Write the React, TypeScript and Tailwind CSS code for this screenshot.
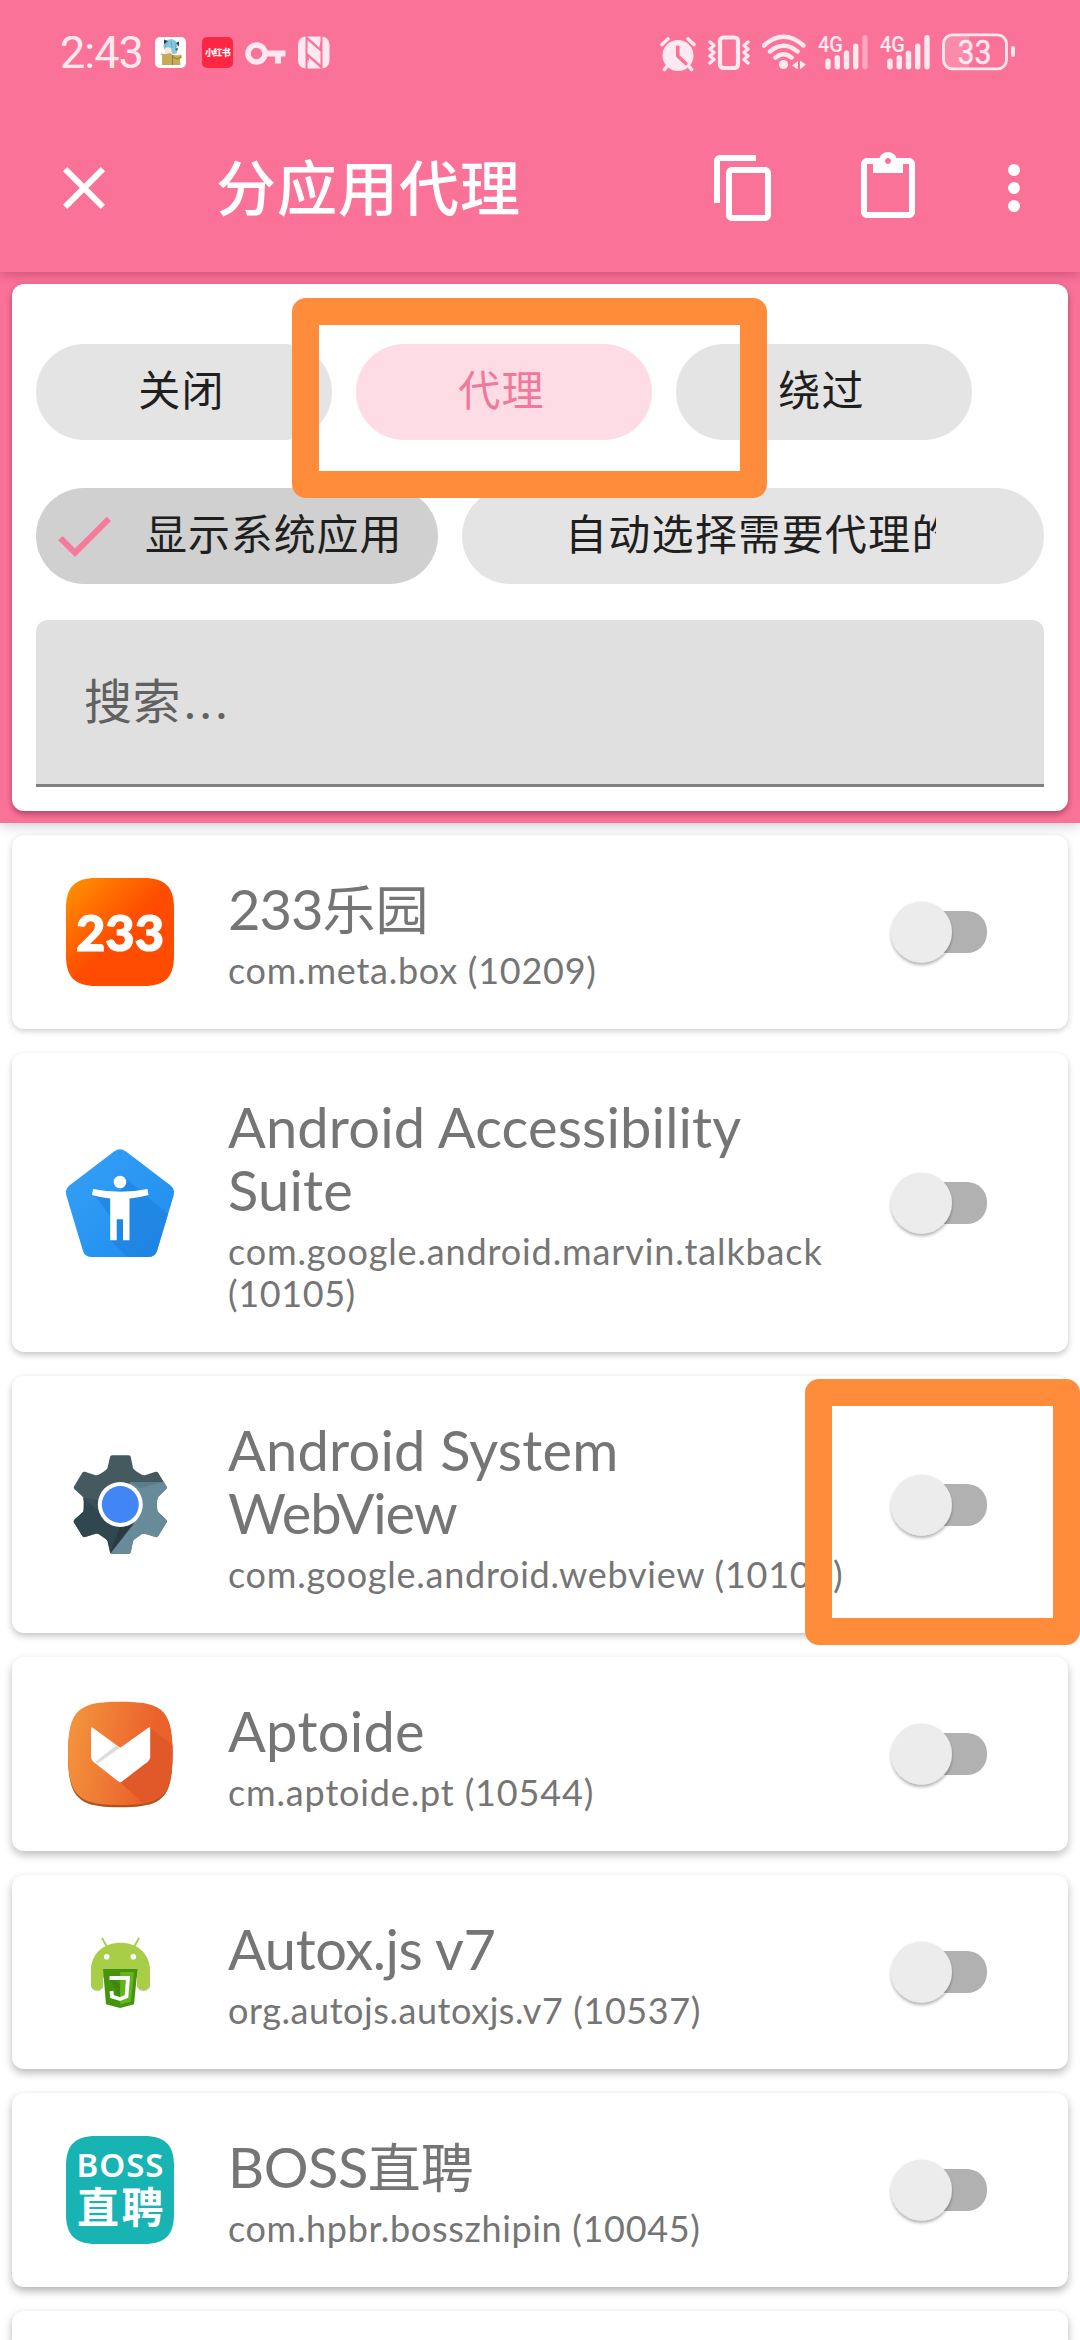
import type { ReactNode } from "react";

const CJK = "font-['Noto_Sans_CJK_SC',sans-serif]";

function StatusBar() {
  return (
    <div className="flex h-[104px] items-start pt-[33px] text-[#ffe9f0]">
      <div className="ml-[60px] flex h-[39px] w-[95px] items-center font-['Roboto','Noto_Sans_CJK_SC',sans-serif] text-[45px] leading-[39px] tracking-[-1px] whitespace-nowrap">
        2:43
      </div>
      <svg className="mt-1 h-[31px] w-[31px]" viewBox="0 0 31 31">
        <rect width="31" height="31" rx="5" fill="#fff" />
        <path d="M9 3.500l3-.5 5-1 4 2 1.500 4-1 4 .5 4.500-5 .5-1-4H9.500l-1-3z" fill="#86c7de" />
        <path d="M9 2.500l4 1.800-4 3zM24 4.500v5l-3-3.500zM20 12l3-1-1 3z" fill="#2d3c4d" />
        <path d="M9.500 12.500c1-2.500 4.500-3 7-.5l-1 4.500h-5z" fill="#fbe6da" />
        <path d="M12 4.500l-2 6M16 4l1 7M20 6l1 8" stroke="#5ba4bf" strokeWidth="0.800" fill="none" />
        <path d="M5.500 16.500l5 .5 5-1 2 2 6 .2 2.500-.7 1 2.500-2 2.500.5 5.500H7V18.500z" fill="#c7ab59" />
        <path d="M17.500 18v10M18 20l4 2 4-2" stroke="#8b7534" strokeWidth="0.900" fill="none" />
      </svg>
      <div className="mt-1 ml-4 flex h-[31px] w-[31px] items-center justify-center rounded-[5px] bg-[#fe2743]">
        <span className={`${CJK} text-[9px] leading-[14px] font-black tracking-[-0.6px] whitespace-nowrap text-white`}>小红书</span>
      </div>
      <svg className="mt-2 ml-[12px] h-[24px] w-[41px]" viewBox="0 0 41 24">
        <circle cx="11.500" cy="12.500" r="8.500" fill="none" stroke="currentColor" strokeWidth="5.600" />
        <path d="M20 9.500h20.500v6H36v7h-6v-7H20z" fill="currentColor" />
      </svg>
      <svg className="mt-[3px] ml-[12px] h-[33px] w-[32px]" viewBox="0 0 32 33">
        <rect x="0" y="0.500" width="31.500" height="32" rx="8" fill="currentColor" />
        <path d="M8.500 33V2L22.500 14V9M23.500 0V31L10 19V24" fill="none" stroke="#fb7299" strokeWidth="2" />
        <path d="M8 0l14.500 13V6M24 33L10 20v7" fill="none" stroke="#fb7299" strokeWidth="0.800" />
      </svg>
      <svg className="mt-[3px] ml-[330px] h-[36px] w-[36px]" viewBox="0 0 36 36">
        <circle cx="18" cy="19.500" r="15.500" fill="currentColor" />
        <path d="M2 8.500l6-5.500M34 8.500L28 3M8 29l-3.500 4.500M28 29l3.500 4.500" stroke="currentColor" strokeWidth="3.600" strokeLinecap="round" />
        <path d="M17.800 11v9l8 7.500" fill="none" stroke="#fb7299" strokeWidth="3.600" strokeLinecap="round" strokeLinejoin="round" />
      </svg>
      <svg className="mt-[2px] ml-[12px] h-[35px] w-[42px]" viewBox="0 0 42 35">
        <rect x="12" y="2.500" width="18" height="30.500" rx="3.500" fill="none" stroke="currentColor" strokeWidth="4.200" />
        <path d="M2 7l4 3.500-4 3.500 4 3.500L2 21l4 3.500L2 28M40 7l-4 3.500 4 3.500-4 3.500 4 3.500-4 3.500 4 3.500" fill="none" stroke="currentColor" strokeWidth="3.400" strokeLinejoin="round" strokeLinecap="round" />
      </svg>
      <svg className="mt-[1px] ml-[12px] h-[36px] w-[44px]" viewBox="0 0 44 36">
        <path d="M2 11.500Q21.500-6 41.500 11.500M8 17.500Q21.500 6 35.500 17.500M13.500 23.500Q21.500 17 29.500 23.500" fill="none" stroke="currentColor" strokeWidth="4.400" strokeLinecap="round" />
        <circle cx="21.500" cy="30.500" r="4.600" fill="currentColor" />
        <path d="M36 27v8.500l-6-4zM38 26.500v9l6-5z" fill="currentColor" />
      </svg>
      <Signal last="#fea6c0" />
      <Signal last="#ffe9f0" />
      <svg className="ml-[12px] h-[38px] w-[73px]" viewBox="0 0 73 38">
        <path d="M9 2H27V36H9Q1.500 36 1.500 27V10Q1.500 2 9 2Z" fill="#fc8aaa" />
        <rect x="1.500" y="1.800" width="63" height="34" rx="9" fill="none" stroke="currentColor" strokeWidth="2.800" />
        <rect x="69" y="13" width="4" height="11" rx="2" fill="currentColor" />
        <text x="32.500" y="31" fontFamily="Roboto, sans-serif" fontSize="34" fill="currentColor" stroke="currentColor" strokeWidth="0.400" textAnchor="middle" textLength="34" lengthAdjust="spacingAndGlyphs">33</text>
      </svg>
    </div>
  );
}

function Signal({ last }: { last: string }) {
  return (
    <svg className="-mt-[5px] ml-[12px] h-[42px] w-[50px]" viewBox="0 -6 50 42">
      <text x="0" y="17.500" fontFamily="Roboto, sans-serif" fontWeight="500" fontSize="22.500" fill="currentColor" textLength="25" lengthAdjust="spacingAndGlyphs">4G</text>
      <rect x="7.300" y="24.500" width="5.400" height="11" rx="2.700" fill="currentColor" />
      <rect x="16.600" y="21" width="5.400" height="14.500" rx="2.700" fill="currentColor" />
      <rect x="25.800" y="16.500" width="5.400" height="19" rx="2.700" fill="currentColor" />
      <rect x="35" y="9.500" width="5.400" height="26" rx="2.700" fill="currentColor" />
      <rect x="44.300" y="1" width="5.400" height="34.500" rx="2.700" fill={last} />
    </svg>
  );
}

function Toolbar() {
  return (
    <div className="flex h-[168px] items-start pt-12">
      <svg className="ml-12 h-[72px] w-[72px]" viewBox="0 0 24 24" fill="#fff">
        <path d="M19 6.410L17.590 5 12 10.590 6.410 5 5 6.410 10.590 12 5 17.590 6.410 19 12 13.410 17.590 19 19 17.590 13.410 12z" />
      </svg>
      <h1 className={`${CJK} ml-[96px] w-[492px] text-[60px] leading-[66px] font-medium tracking-[1px] whitespace-nowrap text-white`}>分应用代理</h1>
      <svg className="h-[72px] w-[72px]" viewBox="0 0 24 24" fill="#fff">
        <path d="M16 1H4c-1.100 0-2 .9-2 2v14h2V3h12V1zm3 4H8c-1.100 0-2 .9-2 2v14c0 1.100.9 2 2 2h11c1.100 0 2-.9 2-2V7c0-1.100-.9-2-2-2zm0 16H8V7h11v14z" />
      </svg>
      <svg className="ml-[72px] h-[72px] w-[72px]" viewBox="0 0 24 24" fill="#fff">
        <path d="M19 2h-4.180C14.400.84 13.300 0 12 0c-1.300 0-2.400.84-2.820 2H5c-1.100 0-2 .9-2 2v16c0 1.100.9 2 2 2h14c1.100 0 2-.9 2-2V4c0-1.100-.9-2-2-2zm-7 0c.55 0 1 .45 1 1s-.45 1-1 1-1-.45-1-1 .45-1 1-1zm7 18H5V4h2v3h10V4h2v16z" />
      </svg>
      <svg className="ml-[54px] h-[72px] w-[72px]" viewBox="0 0 24 24" fill="#fff">
        <circle cx="12" cy="6" r="2" />
        <circle cx="12" cy="12" r="2" />
        <circle cx="12" cy="18" r="2" />
      </svg>
    </div>
  );
}

function FilterCard() {
  return (
    <section className="relative mx-3 h-[527px] rounded-xl bg-white px-6 pt-[60px] shadow-[0_3px_6px_rgba(60,0,20,0.4)]">
      <div className={`${CJK} flex gap-6 text-[42px] leading-[88px] tracking-[1.3px] text-[#1f1f1f]`}>
        <div className="h-24 w-[296px] rounded-full bg-[#e4e4e4] pr-[5px] text-center">关闭</div>
        <div className="h-24 w-[296px] rounded-full bg-[#fddce5] pr-[5px] text-center text-[#f0799b]">代理</div>
        <div className="h-24 w-[296px] rounded-full bg-[#e4e4e4] pr-[5px] text-center">绕过</div>
      </div>
      <div className={`${CJK} mt-12 flex gap-6 text-[42px] leading-[88px] tracking-[1.3px] text-[#1f1f1f]`}>
        <div className="flex h-24 w-[402px] rounded-full bg-[#d0d0d0]">
          <svg className="mt-[12px] ml-[12px] h-[72px] w-[72px]" viewBox="0 0 24 24" fill="#f77a9d">
            <path d="M9 16.170L4.830 12l-1.420 1.410L9 19 21 7l-1.410-1.410z" />
          </svg>
          <span className="ml-[25px] tracking-[0.9px] whitespace-nowrap">显示系统应用</span>
        </div>
        <div className="h-24 w-[582px] rounded-full bg-[#e4e4e4] pl-[103px]">
          <div className="w-[371px] overflow-hidden whitespace-nowrap">自动选择需要代理的</div>
        </div>
      </div>
      <div className={`${CJK} mt-9 h-[167px] rounded-t-xl border-b-[3px] border-[#808080] bg-[#e0e0e0] pl-12 text-[48px] leading-[157px] tracking-[0.6px] text-[#616161]`}>
        搜索<span className="ml-[3px] font-['Lato',sans-serif] leading-none tracking-[4.500px]">...</span>
      </div>
      <div className="pointer-events-none absolute top-[14px] left-[280px] h-[200px] w-[475px] rounded-[14px] border-[27px] border-[#ff8c3b]" />
    </section>
  );
}

function Switch() {
  return (
    <svg className="h-[78px] w-[116px] shrink-0" viewBox="0 0 116 78">
      <defs>
        <filter id="thumb" x="-30%" y="-30%" width="160%" height="160%">
          <feDropShadow dx="0" dy="2.500" stdDeviation="1.800" floodOpacity="0.300" />
        </filter>
      </defs>
      <rect x="20" y="18" width="86" height="42" rx="20" fill="#b1b1b1" />
      <circle cx="40.500" cy="39" r="30.500" fill="#ececec" filter="url(#thumb)" />
    </svg>
  );
}

type Line = { text: string; track: string; cjk?: string };

function AppCard({ icon, title, sub, height, shadow, children }: { icon: ReactNode; title: Line[]; sub: Line[]; height: string; shadow: string; children?: ReactNode }) {
  return (
    <article className={`relative mx-3 flex shrink-0 items-center rounded-xl bg-white ${height} ${shadow}`}>
      <div className="ml-[54px] h-[108px] w-[108px] shrink-0">{icon}</div>
      <div className="ml-[54px] flex w-[641px] flex-col self-start pt-[42px] font-['Lato','Noto_Sans_CJK_SC',sans-serif] text-[#757575]">
        {title.map((l) => (
          <p key={l.text} className={`h-[63px] text-[56px] leading-[63px] whitespace-nowrap ${l.track}`}>
            {l.text}
            {l.cjk && <span className={`${CJK} text-[53px] leading-none tracking-normal`}>{l.cjk}</span>}
          </p>
        ))}
        <div className="h-[9px]" />
        {sub.map((l) => (
          <p key={l.text} className={`h-[42px] text-[36px] leading-[42px] whitespace-nowrap ${l.track}`}>{l.text}</p>
        ))}
      </div>
      <div className="ml-[12px]">
        <Switch />
      </div>
      {children}
    </article>
  );
}

const Icon233 = (
  <svg viewBox="0 0 108 108">
    <defs>
      <linearGradient id="lg233" x1="0" y1="0" x2="0.600" y2="0.600">
        <stop offset="0" stopColor="#ff9500" />
        <stop offset="0.850" stopColor="#ff4c00" />
      </linearGradient>
    </defs>
    <path d="M54 0H78C99 0 108 9 108 30V78C108 99 99 108 78 108H30C9 108 0 99 0 78V30C0 9 9 0 30 0Z" fill="url(#lg233)" />
    <text x="10" y="72.500" fontFamily="Lato, sans-serif" fontWeight="900" fontSize="50" fill="#fff" stroke="#fff" strokeWidth="1.200" textLength="88" lengthAdjust="spacingAndGlyphs">233</text>
  </svg>
);

const IconAccess = (
  <svg viewBox="0 0 108 108">
    <defs>
      <linearGradient id="lgacc" x1="0" y1="0" x2="1" y2="1">
        <stop offset="0" stopColor="#35a0f5" />
        <stop offset="1" stopColor="#1f8df0" />
      </linearGradient>
      <clipPath id="pentclip">
        <path d="M48 2.500Q54-2 60 2.500L104 36Q109.500 40 107.500 47L91 102Q89 108 82 108H26Q19 108 17 102L.5 47Q-1.500 40 4 36Z" />
      </clipPath>
    </defs>
    <g clipPath="url(#pentclip)">
      <rect width="108" height="108" fill="url(#lgacc)" />
      <path d="M58 28L120 80V108H61L44 91V67L27 44L54 50Z" fill="#1c7fdc" opacity="0.600" />
    </g>
    <circle cx="54" cy="33" r="6.300" fill="#fff" />
    <path d="M27 40Q54 45.500 81.500 40L82.500 46Q74 48.500 63.500 49.500V91.300H57V70.300H50.700V91.300H44.200V49.500Q34 48.500 26 46Z" fill="#fff" />
  </svg>
);

const GEAR = "M46 4.700H62.800Q64.500 4.700 64.800 6.500L67 17.500Q67.500 19 73 22.500Q77 25.500 79 24.700L89.500 21.300Q91.300 20.800 92.200 22.300L100.500 36Q101.300 37.500 100 38.800L92 46.500Q91 47.500 91 54Q91 60.500 92 61.500L100 69Q101.300 70.500 100.500 72L92.200 85.500Q91.300 87 89.500 86.500L79 83.200Q77 82.500 73 85.500Q67.500 89 67 90.500L64.800 101.500Q64.500 103.200 62.800 103.200H46Q44.300 103.200 44 101.500L41.500 90.500Q41 89 35.500 85.500Q31.500 82.500 29.500 83.200L19 86.500Q17.200 87 16.300 85.500L8 72Q7.200 70.500 8.500 69L17 61.500Q17.800 60.500 17.800 54Q17.800 47.500 17 46.500L8.500 38.800Q7.200 37.500 8 36L16.300 22.300Q17.200 20.800 19 21.300L29.500 24.700Q31.500 25.500 35.500 22.500Q41 19 41.500 17.500L44 6.500Q44.300 4.700 46 4.700Z";

const IconWebView = (
  <svg viewBox="0 0.500 108 108">
    <clipPath id="gearclip">
      <path d={GEAR} />
    </clipPath>
    <g clipPath="url(#gearclip)">
      <rect width="108" height="108" fill="#455a5f" />
      <path d="M17 47L0 60V108H44L70 70L54 54L34 62Z" fill="#30474f" />
      <path d="M17 47L34 62L36 50Z" fill="#3a4f56" />
      <path d="M64 31.500H108V108H40.500L68 73L60 54Z" fill="#688b9a" />
      <path d="M64 31.500H98L74 37.500Z" fill="#5c7c8a" />
      <path d="M54 76L66 74.500L44 103Z" fill="#283b42" />
    </g>
    <circle cx="54.300" cy="54" r="22.500" fill="#fff" />
    <circle cx="54.300" cy="54" r="18.500" fill="#4285f4" />
  </svg>
);

const IconAptoide = (
  <svg viewBox="0 0 108 108">
    <defs>
      <linearGradient id="lgapt" x1="0" y1="0.300" x2="1" y2="0.500">
        <stop offset="0" stopColor="#f3953d" />
        <stop offset="0.800" stopColor="#eb612b" />
      </linearGradient>
      <clipPath id="aptclip">
        <path d="M54 1.700C96 1.700 106.500 9 106.500 53C106.500 97 96 105 54 105C13 105 2 97 2 53C2 9 13 1.700 54 1.700Z" />
      </clipPath>
    </defs>
    <path d="M54 4C96 4 106.500 11 106.500 55C106.500 99 96 107.300 54 107.300C13 107.300 2 99 2 55C2 11 13 4 54 4Z" fill="#b0521c" />
    <g clipPath="url(#aptclip)">
      <rect width="108" height="108" fill="url(#lgapt)" />
      <path d="M84 28L108 46V108H82L54 82Z" fill="#e25929" />
    </g>
    <path d="M25 28.500Q25 26.500 27 28L54.200 47.700L82 28Q84.200 26.500 84.200 28.500V57Q84.200 59.500 82 61.500L56 81.500Q54.200 83 52.400 81.500L27 61.500Q25 59.500 25 57Z" fill="#fff" />
    <path d="M54.200 47.700L31.500 63.500L29.500 61.800L50 45.500Z" fill="#dcdcdc" />
  </svg>
);

const IconAutox = (
  <svg viewBox="0 0 108 108">
    <path d="M36 20l5 9M73 20l-5 9" stroke="#a7c94f" strokeWidth="1.800" />
    <path d="M25 67V54C25 36 38 25.500 54.500 25.500S84 36 84 54V67C84 75 72 75 71 68V60H37V68C37 75 25 75 25 67Z" fill="#8fa94c" opacity="0.500" />
    <path d="M25 66V53C25 35 38 24.700 54.500 24.700S84 35 84 53V66C84 74 72 74 71 67V60H37V67C37 74 25 74 25 66Z" fill="#a8ce48" />
    <circle cx="40.700" cy="38.700" r="2.800" fill="#fff" />
    <circle cx="67.300" cy="38.700" r="2.800" fill="#fff" />
    <path d="M37 51H71.500L68 86.300L54.200 90L40 86.300Z" fill="#46930f" />
    <path d="M54.200 54H68L65 83.500L54.200 86.500Z" fill="#62b51a" />
    <path d="M42 58L54 66V80Z" fill="#38800c" opacity="0.600" />
    <path d="M43.500 60H62L60.500 78.500L54 81L46 78.500L45.500 73" fill="none" stroke="#fff" strokeWidth="3.800" />
  </svg>
);

const IconBoss = (
  <svg viewBox="0 0 108 108">
    <path d="M54 0H78C99 0 108 9 108 30V78C108 99 99 108 78 108H30C9 108 0 99 0 78V30C0 9 9 0 30 0Z" fill="#18b3b3" />
    <text x="10.500" y="41.300" fontFamily="'Noto Sans', sans-serif" fontWeight="600" fontSize="33" fill="#fff" textLength="87" lengthAdjust="spacing">BOSS</text>
    <text x="11" y="87" fontFamily="'Noto Sans CJK SC', sans-serif" fontWeight="700" fontSize="42" fill="#fff" letterSpacing="2.500">直聘</text>
  </svg>
);

export default function App() {
  return (
    <main className="flex h-[2340px] w-[1080px] flex-col overflow-hidden bg-white">
      <header className="relative z-10 h-[823px] shrink-0 bg-[#fb7299] shadow-[0_2px_12px_rgba(0,0,0,0.22)]">
        <div className="h-[272px] shadow-[0_2px_12px_rgba(90,0,30,0.3)]">
          <StatusBar />
          <Toolbar />
        </div>
        <div className="h-3" />
        <FilterCard />
      </header>
      <div className="mt-3 flex shrink-0 flex-col gap-6">
        <AppCard icon={Icon233} height="h-[194px]" shadow="shadow-[0_2px_6px_rgba(0,0,0,0.2)]" title={[{ text: "233", track: "tracking-[-1px]", cjk: "乐园" }]} sub={[{ text: "com.meta.box (10209)", track: "tracking-[0.75px]" }]} />
        <AppCard icon={IconAccess} height="h-[299px]" shadow="shadow-[0_3px_6px_rgba(0,0,0,0.22)]" title={[{ text: "Android Accessibility", track: "tracking-[0.15px]" }, { text: "Suite", track: "tracking-[0.2px]" }]} sub={[{ text: "com.google.android.marvin.talkback", track: "tracking-[0.87px]" }, { text: "(10105)", track: "tracking-[0.6px]" }]} />
        <AppCard icon={IconWebView} height="h-[257px]" shadow="shadow-[0_3px_7px_rgba(0,0,0,0.24)]" title={[{ text: "Android System", track: "tracking-[0.2px]" }, { text: "WebView", track: "tracking-[-1.1px]" }]} sub={[{ text: "com.google.android.webview (10105)", track: "tracking-[0.75px]" }]}>
          <div className="pointer-events-none absolute top-[3px] -right-3 h-[266px] w-[275px] rounded-[14px] border-[27px] border-[#ff8c3b]" />
        </AppCard>
        <AppCard icon={IconAptoide} height="h-[194px]" shadow="shadow-[0_4px_8px_rgba(0,0,0,0.26)]" title={[{ text: "Aptoide", track: "tracking-[0.3px]" }]} sub={[{ text: "cm.aptoide.pt (10544)", track: "tracking-[0.85px]" }]} />
        <AppCard icon={IconAutox} height="h-[194px]" shadow="shadow-[0_4px_8px_rgba(0,0,0,0.28)]" title={[{ text: "Autox.js v7", track: "tracking-[-0.4px]" }]} sub={[{ text: "org.autojs.autoxjs.v7 (10537)", track: "tracking-[0.57px]" }]} />
        <AppCard icon={IconBoss} height="h-[194px]" shadow="shadow-[0_4px_9px_rgba(0,0,0,0.3)]" title={[{ text: "BOSS", track: "tracking-[-0.5px]", cjk: "直聘" }]} sub={[{ text: "com.hpbr.bosszhipin (10045)", track: "tracking-[0.67px]" }]} />
        <article className="mx-3 h-[100px] shrink-0 rounded-xl bg-white shadow-[0_4px_9px_rgba(0,0,0,0.3)]" />
      </div>
    </main>
  );
}
